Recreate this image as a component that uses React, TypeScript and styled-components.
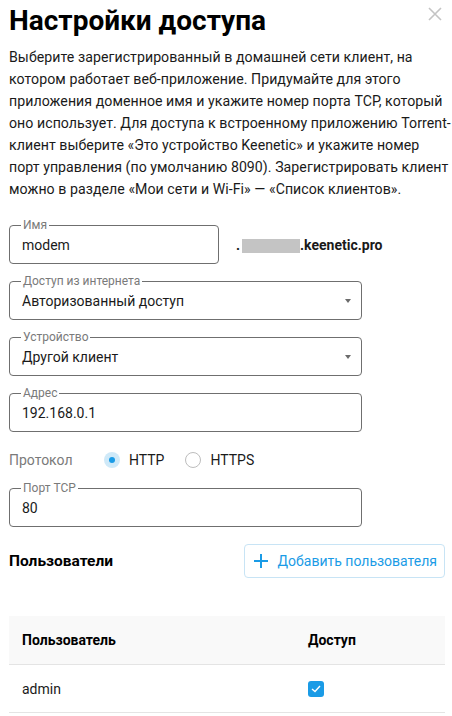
import React from "react";
import styled, { createGlobalStyle } from "styled-components";

const GlobalStyle = createGlobalStyle`
  body {
    margin: 0;
    background: #fff;
    font-family: Roboto, "Noto Sans", sans-serif;
    color: #1a1a1a;
  }
`;

const Page = styled.div`
  position: relative;
  width: 452px;
  height: 716px;
  overflow: hidden;
  padding: 0 7px 0 9px;
  box-sizing: border-box;
`;

const Title = styled.h1`
  margin: 0;
  padding-top: 3px;
  font-size: 28px;
  line-height: 36px;
  font-weight: 700;
  color: #000;
`;

const Close = styled.button`
  position: absolute;
  top: 5px;
  right: 8px;
  width: 18px;
  height: 18px;
  padding: 0;
  border: none;
  background: none;
  color: #c4c4c4;
  cursor: pointer;
`;

const Intro = styled.p`
  margin: 7px -9px 0 0;
  font-size: 14.15px;
  letter-spacing: 0.05px;
  line-height: 22px;
  white-space: nowrap;
  color: #1a1a1a;
`;

const Form = styled.div`
  display: flex;
  flex-direction: column;
  gap: 17px;
  margin-top: 25px;
`;

const Row = styled.div`
  display: flex;
  align-items: center;
`;

const Field = styled.div<{ $width: number }>`
  position: relative;
  width: ${(p) => p.$width}px;
  height: 39px;
  box-sizing: border-box;
  padding: 0 10px 0 12px;
  border: 1px solid #6f6f6f;
  border-radius: 4px;
  display: flex;
  align-items: center;
  justify-content: space-between;
  font-size: 14px;
  color: #1a1a1a;
`;

const Label = styled.span`
  position: absolute;
  top: -7px;
  left: 11px;
  padding: 0 2px;
  background: #fff;
  font-size: 12px;
  line-height: 12px;
  color: #7a7a7a;
`;

const Arrow = styled.span`
  width: 0;
  height: 0;
  border-left: 3.5px solid transparent;
  border-right: 3.5px solid transparent;
  border-top: 4px solid #6b6b6b;
`;

const Domain = styled.div`
  display: flex;
  align-items: center;
  margin-left: 17px;
  font-size: 14px;
  font-weight: 700;
  color: #1a1a1a;
`;

const Mask = styled.span`
  display: inline-block;
  width: 58px;
  height: 14px;
  background: #c4c4c4;
  margin: 2px 0 0 2px;
`;

const Protocol = styled.div`
  display: flex;
  align-items: center;
  height: 22px;
  font-size: 14px;
`;

const ProtoLabel = styled.span`
  width: 95px;
  color: #7a7a7a;
`;

const RadioOption = styled.label`
  display: flex;
  align-items: center;
  gap: 9px;
  margin-right: 21px;
  color: #1a1a1a;
`;

const RadioMark = styled.span<{ $on?: boolean }>`
  width: 16px;
  height: 16px;
  border-radius: 50%;
  box-sizing: border-box;
  display: flex;
  align-items: center;
  justify-content: center;
  background: ${(p) => (p.$on ? "#cfe9f8" : "#fff")};
  border: ${(p) => (p.$on ? "none" : "1px solid #bdbdbd")};
  &::after {
    content: "";
    display: ${(p) => (p.$on ? "block" : "none")};
    width: 6px;
    height: 6px;
    border-radius: 50%;
    background: #1a9be6;
  }
`;

const UsersHead = styled.div`
  display: flex;
  align-items: center;
  justify-content: space-between;
  margin-top: 17px;
`;

const Subtitle = styled.h2`
  margin: 0;
  font-size: 15.5px;
  font-weight: 700;
  color: #000;
`;

const AddButton = styled.button`
  display: flex;
  align-items: center;
  gap: 9px;
  height: 34px;
  padding: 0 7px 0 8px;
  border: 1px solid #c8e4f5;
  border-radius: 4px;
  background: #fff;
  color: #1a9be6;
  font-family: inherit;
  font-size: 14px;
  cursor: pointer;
`;

const Table = styled.table`
  width: 436px;
  margin-top: 38px;
  border-collapse: collapse;
  font-size: 14px;
`;

const Th = styled.th<{ $w?: number }>`
  height: 48px;
  padding: 0 13px;
  text-align: left;
  font-weight: 700;
  background: #f9f9f9;
  border-bottom: 1px solid #e4e4e4;
  width: ${(p) => (p.$w ? `${p.$w}px` : "auto")};
  color: #000;
`;

const Td = styled.td`
  height: 47px;
  padding: 0 13px;
  border-bottom: 1px solid #e4e4e4;
  color: #1a1a1a;
`;

const Check = styled.span`
  display: flex;
  align-items: center;
  justify-content: center;
  width: 16px;
  height: 16px;
  border-radius: 3px;
  background: #1a9be6;
  margin-top: 1px;
`;

const introLines = [
  "Выберите зарегистрированный в домашней сети клиент, на",
  "котором работает веб-приложение. Придумайте для этого",
  "приложения доменное имя и укажите номер порта TCP, который",
  "оно использует. Для доступа к встроенному приложению Torrent-",
  "клиент выберите «Это устройство Keenetic» и укажите номер",
  "порт управления (по умолчанию 8090). Зарегистрировать клиент",
  "можно в разделе «Мои сети и Wi-Fi» — «Список клиентов».",
];

export default function App() {
  return (
    <Page>
      <GlobalStyle />
      <Title>Настройки доступа</Title>
      <Close aria-label="Закрыть">
        <svg width="18" height="18" viewBox="0 0 18 18">
          <path d="M3 3L15 15M15 3L3 15" stroke="currentColor" strokeWidth="1.6" />
        </svg>
      </Close>
      <Intro>
        {introLines.map((line, i) => (
          <React.Fragment key={i}>
            {line}
            {i < introLines.length - 1 && <br />}
          </React.Fragment>
        ))}
      </Intro>
      <Form>
        <Row>
          <Field $width={210}>
            <Label>Имя</Label>
            <span>modem</span>
          </Field>
          <Domain>
            .<Mask />.keenetic.pro
          </Domain>
        </Row>
        <Field $width={353}>
          <Label>Доступ из интернета</Label>
          <span>Авторизованный доступ</span>
          <Arrow />
        </Field>
        <Field $width={353}>
          <Label>Устройство</Label>
          <span>Другой клиент</span>
          <Arrow />
        </Field>
        <Field $width={353}>
          <Label>Адрес</Label>
          <span>192.168.0.1</span>
        </Field>
        <Protocol>
          <ProtoLabel>Протокол</ProtoLabel>
          <RadioOption>
            <RadioMark $on />
            HTTP
          </RadioOption>
          <RadioOption>
            <RadioMark />
            HTTPS
          </RadioOption>
        </Protocol>
        <Field $width={353}>
          <Label>Порт TCP</Label>
          <span>80</span>
        </Field>
      </Form>
      <UsersHead>
        <Subtitle>Пользователи</Subtitle>
        <AddButton>
          <svg width="16" height="16" viewBox="0 0 16 16">
            <path d="M8 1V15M1 8H15" stroke="currentColor" strokeWidth="2" />
          </svg>
          Добавить пользователя
        </AddButton>
      </UsersHead>
      <Table>
        <thead>
          <tr>
            <Th $w={260}>Пользователь</Th>
            <Th>Доступ</Th>
          </tr>
        </thead>
        <tbody>
          <tr>
            <Td>admin</Td>
            <Td>
              <Check>
                <svg width="10" height="8" viewBox="0 0 10 8">
                  <path d="M1 4L4 6.5L9 1" stroke="#fff" strokeWidth="1.4" fill="none" />
                </svg>
              </Check>
            </Td>
          </tr>
        </tbody>
      </Table>
    </Page>
  );
}
